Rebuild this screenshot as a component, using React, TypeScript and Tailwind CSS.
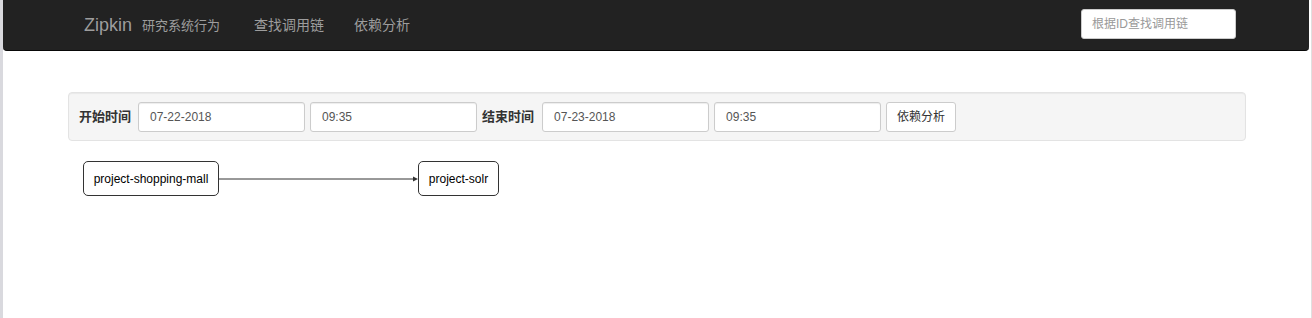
import React from "react";

const font = { fontFamily: '"Liberation Sans", Arial, "Noto Sans CJK SC", sans-serif' };

function Field({ value, w = "w-[167px]" }: { value: string; w?: string }) {
  return (
    <div
      className={`${w} h-[30px] bg-white border border-[#ccc] rounded-[3px] flex items-center pl-[11px] text-[12px] text-[#555] shadow-[inset_0_1px_1px_rgba(0,0,0,0.075)]`}
    >
      {value}
    </div>
  );
}

export default function App() {
  return (
    <div className="flex w-[1312px] h-[318px] bg-white overflow-hidden" style={font}>
      <div className="w-[3px] bg-[#d9d9de] shrink-0" />
      <div className="flex-1 flex flex-col">
        <div className="h-[51px] bg-[#222] border-b border-[#080808] rounded-b-[4px] flex items-center">
          <div className="flex items-center pl-[81px] h-full">
            <span className="text-[18px] text-[#9d9d9d] leading-none">Zipkin</span>
            <span className="ml-[10px] text-[13px] text-[#9d9d9d] leading-none">研究系统行为</span>
            <span className="ml-[34px] text-[14px] text-[#9d9d9d] leading-none">查找调用链</span>
            <span className="ml-[30px] text-[14px] text-[#9d9d9d] leading-none">依赖分析</span>
          </div>
          <div className="ml-auto mr-[73px] mb-[2px] w-[155px] h-[30px] bg-white border border-[#ccc] rounded-[3px] flex items-center pl-[10px] text-[12px] text-[#999]">
            根据ID查找调用链
          </div>
        </div>
        <div className="pl-[65px] pt-[41px]">
          <div className="w-[1178px] h-[49px] bg-[#f5f5f5] border border-[#e3e3e3] rounded-[4px] shadow-[inset_0_1px_1px_rgba(0,0,0,0.05)] flex items-center pl-[10px] gap-[5px]">
            <span className="text-[13px] font-bold text-[#333] mr-[2px]">开始时间</span>
            <Field value="07-22-2018" />
            <Field value="09:35" />
            <span className="text-[13px] font-bold text-[#333] mr-[3px]">结束时间</span>
            <Field value="07-23-2018" />
            <Field value="09:35" />
            <div className="h-[30px] px-[10px] bg-white border border-[#ccc] rounded-[3px] flex items-center text-[12px] text-[#333]">
              依赖分析
            </div>
          </div>
          <div className="flex items-center mt-[20px] ml-[15px]">
            <div className="h-[35px] w-[136px] justify-center border border-[#333] rounded-[5px] flex items-center text-[12px] text-black">
              project-shopping-mall
            </div>
            <svg width="199" height="10" className="block">
              <line x1="0" y1="5" x2="194" y2="5" stroke="#333" strokeWidth="1" />
              <polygon points="194,2.5 199,5 194,7.5" fill="#333" />
            </svg>
            <div className="h-[35px] w-[81px] justify-center border border-[#333] rounded-[5px] flex items-center text-[12px] text-black">
              project-solr
            </div>
          </div>
        </div>
      </div>
      <div className="w-[2px] shrink-0 bg-white" />
      <div className="w-[1px] shrink-0 bg-[#e0e0e0]" />
    </div>
  );
}
